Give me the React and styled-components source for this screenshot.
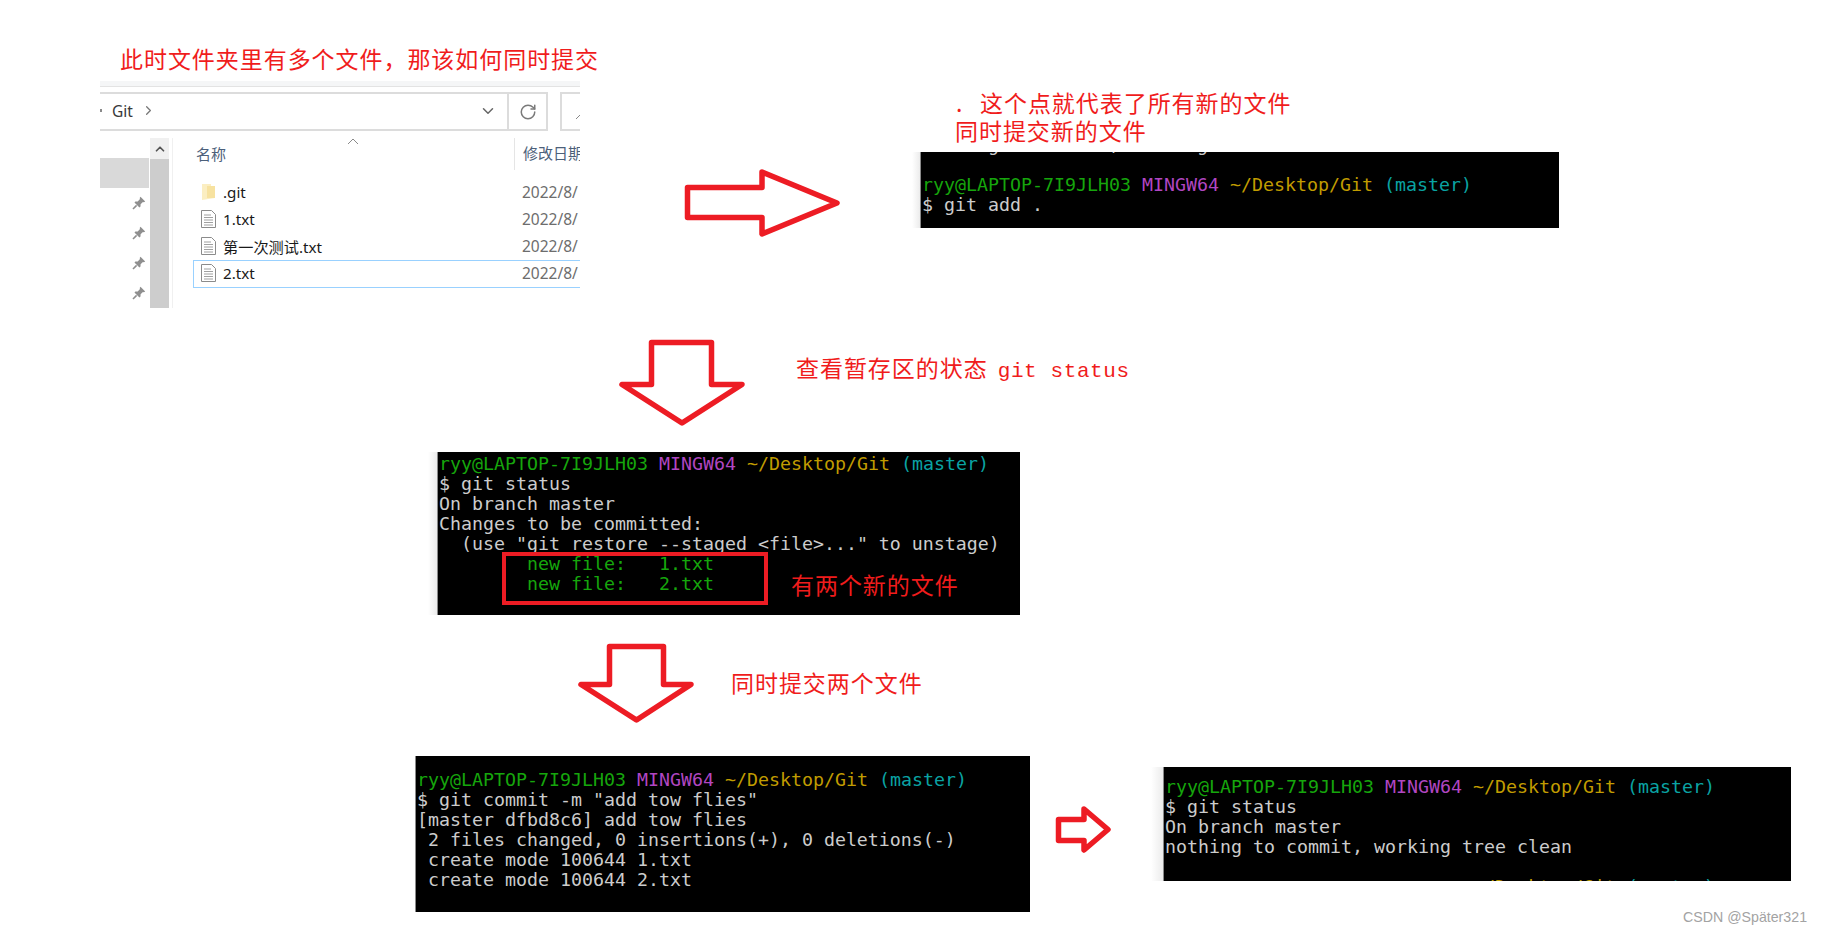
import React from "react";
import styled, { createGlobalStyle } from "styled-components";
import { ChevronDown, ChevronRight, ChevronUp, RotateCw } from "lucide-react";

const Global = createGlobalStyle`
  html, body { margin: 0; padding: 0; background: #fff; overflow: hidden; }
  * { box-sizing: border-box; }
`;

const Canvas = styled.div`
  position: relative;
  width: 1823px;
  height: 935px;
  background: #fff;
  overflow: hidden;
  font-family: "Noto Sans", "Noto Sans CJK SC", sans-serif;
`;

const Note = styled.div`
  position: absolute;
  left: ${(p) => p.$x}px;
  top: ${(p) => p.$y}px;
  line-height: 28px;
  white-space: pre;
  color: #f01c1c;
  font-family: "Noto Sans CJK SC", serif;
  font-size: 23px;
  letter-spacing: 0.95px;
`;

const NoteDot = styled.span`
  display: inline-block;
  width: 25px;
  padding-left: 1px;
`;

const Code = styled.span`
  font-family: "Liberation Mono", monospace;
  font-size: 21px;
  letter-spacing: 0.6px;
  margin-left: 4px;
`;

const Watermark = styled.div`
  position: absolute;
  left: 1683px;
  top: 908px;
  font-family: "Liberation Sans", sans-serif;
  font-size: 14.2px;
  line-height: 18px;
  color: #a3a3a3;
  white-space: nowrap;
`;

/* ---------- terminals ---------- */

const Frame = styled.div`
  position: absolute;
  left: ${(p) => p.$x}px;
  top: ${(p) => p.$y}px;
  width: ${(p) => p.$w}px;
  height: ${(p) => p.$h}px;
  display: flex;
`;

const Strip = styled.div`
  flex: 0 0 ${(p) => p.$w}px;
  background: linear-gradient(to right, #ffffff, #ececec calc(100% - 1px), #8a8a8a calc(100% - 1px));
`;

const Screen = styled.div`
  position: relative;
  flex: 1;
  background: #000;
  overflow: hidden;
  padding: ${(p) => p.$top}px 0 0 1px;
  font-family: "DejaVu Sans Mono", monospace;
  font-size: 18.27px;
  line-height: 20px;
  color: #cccccc;
`;

const Line = styled.div`
  height: 20px;
  white-space: pre;
  margin-top: ${(p) => p.$offset ?? 0}px;
`;

const Green = styled.span`color: #16a60c;`;
const Purple = styled.span`color: #b146c2;`;
const Yellow = styled.span`color: #c19c00;`;
const Teal = styled.span`color: #0aa3a3;`;

const RedBox = styled.div`
  position: absolute;
  left: 64px;
  top: 100px;
  width: 266px;
  height: 53px;
  border: 4px solid #ed1c24;
`;

const Prompt = () => (
  <Line>
    <Green>ryy@LAPTOP-7I9JLH03</Green> <Purple>MINGW64</Purple>{" "}
    <Yellow>~/Desktop/Git</Yellow> <Teal>(master)</Teal>
  </Line>
);

/* ---------- arrows ---------- */

const ArrowSvg = styled.svg`
  position: absolute;
  left: ${(p) => p.$x}px;
  top: ${(p) => p.$y}px;
  overflow: visible;
`;

const Arrow = ({ x, y, w, h, points }) => (
  <ArrowSvg $x={x} $y={y} width={w} height={h} viewBox={`0 0 ${w} ${h}`}>
    <polygon points={points} fill="#fff" stroke="#ed1c24" strokeWidth="5.5" strokeLinejoin="round" />
  </ArrowSvg>
);

/* ---------- explorer ---------- */

const Explorer = styled.div`
  position: absolute;
  left: 100px;
  top: 81px;
  width: 480px;
  height: 227px;
  overflow: hidden;
  display: flex;
  flex-direction: column;
`;

const TopStrip = styled.div`
  flex: 0 0 6px;
  background: #f5f6f7;
  border-bottom: 1px solid #e3e3e3;
  margin-bottom: 5px;
`;

const AddressRow = styled.div`
  flex: 0 0 39px;
  display: flex;
  margin-bottom: 7px;
`;

const AddressBar = styled.div`
  flex: 0 0 409px;
  display: flex;
  align-items: center;
  border: 2px solid #dcdcdc;
  border-left: 0;
  padding: 0 10px 2px 0;
  color: #3a3a3a;
  font-size: 15.5px;
`;

const Crumb = styled.span`
  margin-right: 8px;
`;

const BreadcrumbTick = styled.i`
  width: 2px;
  height: 3px;
  margin-right: 10px;
  background: #8a8a8a;
`;

const Spacer = styled.div`flex: 1;`;

const RefreshBox = styled.div`
  flex: 0 0 39px;
  display: flex;
  align-items: center;
  justify-content: center;
  border: 2px solid #dcdcdc;
  border-left: 0;
  margin-right: 12px;
  color: #7a7a7a;
`;

const SearchBox = styled.div`
  flex: 1;
  display: flex;
  justify-content: flex-end;
  align-items: flex-end;
  padding-bottom: 10px;
  border: 2px solid #dcdcdc;
  border-right: 0;
`;

const Body = styled.div`
  flex: 1;
  display: grid;
  grid-template-columns: 50px 19px 1fr;
  min-height: 0;
`;

const Nav = styled.div`
  padding-top: 20px;
`;

const NavSelected = styled.div`
  width: 49px;
  height: 30px;
  background: #d9d9d9;
`;

const PinList = styled.div`
  display: flex;
  flex-direction: column;
  align-items: flex-end;
  gap: 16px;
  padding: 8px 4px 0 0;
`;

const Scrollbar = styled.div`
  display: flex;
  flex-direction: column;
`;

const ScrollButton = styled.div`
  flex: 0 0 21px;
  background: #f0f0f0;
  display: flex;
  align-items: center;
  justify-content: center;
  color: #555;
`;

const ScrollThumb = styled.div`
  flex: 1;
  background: #cdcdcd;
`;

const FileArea = styled.div`
  position: relative;
  margin-left: 3px;
  border-left: 1px solid #f0f0f0;
  padding-left: 20px;
`;

const HeaderRow = styled.div`
  height: 32px;
  display: flex;
  align-items: center;
  margin-bottom: 10px;
  font-size: 15px;
  color: #4c607a;
  padding-left: 3px;
`;

const HeaderName = styled.div`
  flex: 0 0 318px;
  padding-bottom: 2px;
`;

const HeaderDate = styled.div`
  flex: 1;
  height: 32px;
  line-height: 30px;
  padding-left: 8px;
  border-left: 1px solid #e5e5e5;
  white-space: nowrap;
`;

const SortCaret = styled.svg`
  position: absolute;
  left: 174px;
  top: 0;
`;

const Row = styled.div`
  height: ${(p) => (p.$selected ? 28 : 27)}px;
  margin-top: ${(p) => (p.$selected ? -1 : 0)}px;
  padding-bottom: 3px;
  display: flex;
  align-items: center;
  border: 1px solid ${(p) => (p.$selected ? "#99d1ff" : "transparent")};
  border-right: 0;
  font-size: 15.2px;
  color: #1a1a1a;
`;

const IconSlot = styled.div`
  flex: 0 0 29px;
  padding-left: 7px;
  display: flex;
`;

const FileName = styled.div`
  flex: 0 0 299px;
  white-space: nowrap;
`;

const FileDate = styled.div`
  color: #6d6d6d;
  font-size: 15.5px;
  white-space: nowrap;
`;

const DocIcon = () => (
  <svg width="15" height="18" viewBox="0 0 15 18">
    <path d="M.5.5h10l4 4v13H.5z" fill="#fff" stroke="#8b8b8b" />
    <path d="M3 5h7M3 7.5h9M3 10h9M3 12.5h9M3 15h9" stroke="#a0a0a0" />
  </svg>
);

const FolderIcon = () => (
  <svg width="15" height="18" viewBox="0 0 15 18">
    <path d="M1 1h9v2h4v12L1 17z" fill="#fbeec2" />
    <path d="M6 3h8v12H6z" fill="#f7e2a0" />
  </svg>
);

const PinIcon = () => (
  <svg width="14" height="14" viewBox="0 0 14 14">
    <path d="M8.5 0.8 13.2 5.5 11.9 6.3 10.9 6 8.6 8.3 8.5 10.6 7.4 11.5 2.5 6.6 3.4 5.5 5.7 5.4 8 3.1 7.7 2.1z" fill="#8f8f8f" />
    <path d="M4.6 9.4 1 13" stroke="#8f8f8f" strokeWidth="1.6" />
  </svg>
);

const files = [
  { name: ".git", icon: <FolderIcon /> },
  { name: "1.txt", icon: <DocIcon /> },
  { name: "第一次测试.txt", icon: <DocIcon /> },
  { name: "2.txt", icon: <DocIcon />, selected: true },
];

export default function App() {
  return (
    <Canvas>
      <Global />

      <Note $x={120} $y={44}>此时文件夹里有多个文件，那该如何同时提交</Note>

      <Explorer>
        <TopStrip />
        <AddressRow>
          <AddressBar>
            <BreadcrumbTick />
            <Crumb>Git</Crumb>
            <ChevronRight size={15} color="#777" />
            <Spacer />
            <ChevronDown size={18} color="#666" />
          </AddressBar>
          <RefreshBox>
            <RotateCw size={18} />
          </RefreshBox>
          <SearchBox>
            <svg width="4" height="4" viewBox="0 0 4 4">
              <path d="M0 4 4 0" stroke="#888" />
            </svg>
          </SearchBox>
        </AddressRow>
        <Body>
          <Nav>
            <NavSelected />
            <PinList>
              <PinIcon />
              <PinIcon />
              <PinIcon />
              <PinIcon />
            </PinList>
          </Nav>
          <Scrollbar>
            <ScrollButton>
              <ChevronUp size={14} strokeWidth={3} />
            </ScrollButton>
            <ScrollThumb />
          </Scrollbar>
          <FileArea>
            <SortCaret width="12" height="7" viewBox="0 0 12 7">
              <path d="M1 6 6 1l5 5" fill="none" stroke="#8a8a8a" />
            </SortCaret>
            <HeaderRow>
              <HeaderName>名称</HeaderName>
              <HeaderDate>修改日期</HeaderDate>
            </HeaderRow>
            {files.map((f) => (
              <Row key={f.name} $selected={f.selected}>
                <IconSlot>{f.icon}</IconSlot>
                <FileName>{f.name}</FileName>
                <FileDate>2022/8/</FileDate>
              </Row>
            ))}
          </FileArea>
        </Body>
      </Explorer>

      <Arrow x={685} y={169} w={154} h={68} points="2.5,18.5 77,18.5 77,3 152,34 77,65 77,48.5 2.5,48.5" />

      <Note $x={955} $y={88}>
        <div><NoteDot>.</NoteDot>这个点就代表了所有新的文件</div>
        <div>同时提交新的文件</div>
      </Note>

      <Frame $x={912} $y={152} $w={647} $h={76}>
        <Strip $w={9} />
        <Screen $top={0}>
          <Line $offset={-17}>{"      g          ,       g"}</Line>
          <Line />
          <Prompt />
          <Line>$ git add .</Line>
        </Screen>
      </Frame>

      <Arrow x={620} y={340} w={124} h={86} points="31.5,2.5 91.5,2.5 91.5,44.5 122,44.5 62,83 2,44.5 31.5,44.5" />

      <Note $x={796} $y={353}>
        查看暂存区的状态 <Code>git status</Code>
      </Note>

      <Frame $x={428} $y={452} $w={592} $h={163}>
        <Strip $w={10} />
        <Screen $top={2}>
          <Prompt />
          <Line>$ git status</Line>
          <Line>On branch master</Line>
          <Line>Changes to be committed:</Line>
          <Line>{'  (use "git restore --staged <file>..." to unstage)'}</Line>
          <Line><Green>{"        new file:   1.txt"}</Green></Line>
          <Line><Green>{"        new file:   2.txt"}</Green></Line>
          <RedBox />
        </Screen>
      </Frame>

      <Note $x={791} $y={570}>有两个新的文件</Note>

      <Arrow x={579} y={644} w={114} h={79} points="30.5,2.5 84.5,2.5 84.5,40.5 112,40.5 57.5,76 2,40.5 30.5,40.5" />

      <Note $x={731} $y={668}>同时提交两个文件</Note>

      <Frame $x={415} $y={756} $w={615} $h={156}>
        <Strip $w={1} />
        <Screen $top={14}>
          <Prompt />
          <Line>$ git commit -m "add tow flies"</Line>
          <Line>[master dfbd8c6] add tow flies</Line>
          <Line>{" 2 files changed, 0 insertions(+), 0 deletions(-)"}</Line>
          <Line>{" create mode 100644 1.txt"}</Line>
          <Line>{" create mode 100644 2.txt"}</Line>
        </Screen>
      </Frame>

      <Arrow x={1056} y={805} w={55} h={49} points="2.5,14.5 28,14.5 28,4 52,24.5 28,45 28,35.5 2.5,35.5" />

      <Frame $x={1151} $y={767} $w={640} $h={114}>
        <Strip $w={13} />
        <Screen $top={10}>
          <Prompt />
          <Line>$ git status</Line>
          <Line>On branch master</Line>
          <Line>nothing to commit, working tree clean</Line>
          <Line />
          <Line>
            {"                            "}<Yellow>~/Desktop/Git</Yellow> <Teal>(master)</Teal>
          </Line>
        </Screen>
      </Frame>

      <Watermark>CSDN @Später321</Watermark>
    </Canvas>
  );
}
